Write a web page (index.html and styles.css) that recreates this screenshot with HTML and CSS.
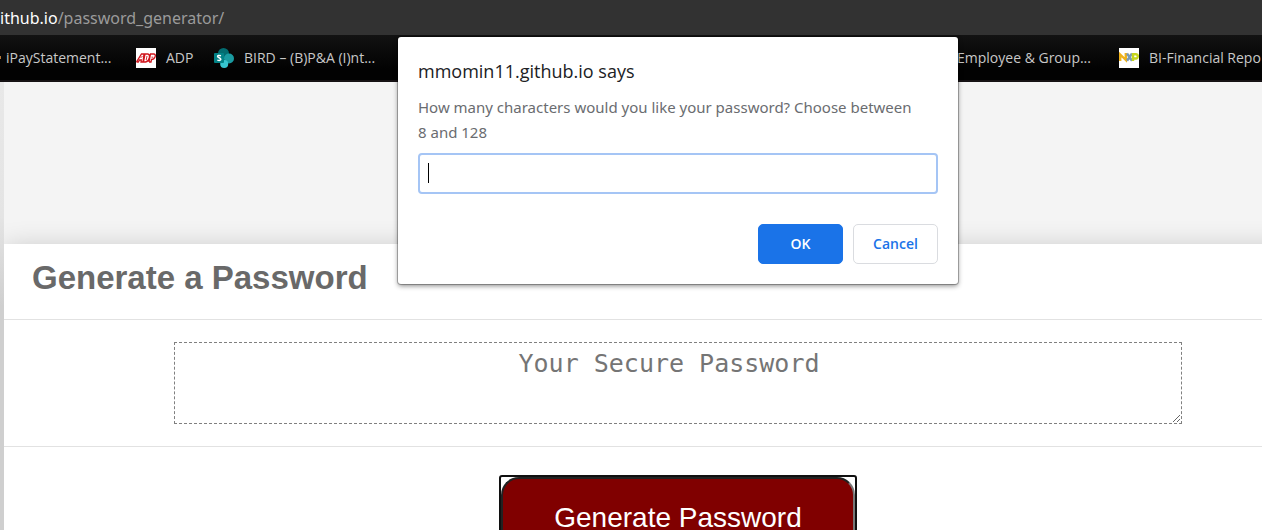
FILE: index.html
```html
<!DOCTYPE html>
<html lang="en">
<head>
<meta charset="utf-8">
<title>Password Generator</title>
<link rel="stylesheet" href="styles.css">
</head>
<body>
<header class="browser">
  <div class="address"><span class="host">ithub.io</span>/password_generator/</div>
  <nav class="bookmarks">
    <a class="bookmark first" href="#"><i class="dot"></i>iPayStatement...</a>
    <a class="bookmark" href="#">
      <svg class="icon" viewBox="0 0 20 20"><path fill="#fff" d="M0 0h20v20H0z"/><g fill="none" stroke="#d0141c" stroke-width="1.3"><path d="M.5 14L5.500 6H8L7 14H5L5.300 12H3.500L2.300 14H.5M7.500 14L9 6H12Q14 6.500 13.300 10T9.500 14H7.500M13 14L14.500 6H18Q20 6.500 19 9T15.500 11.500L15 14H13"/><path stroke-width=".9" d="M4.500 10L6.500 8M10.200 12L11 8M15.500 9.200H17.200"/></g></svg>
      ADP</a>
    <a class="bookmark" href="#">
      <svg class="icon" viewBox="0 0 20 20"><circle cx="9.500" cy="5.500" r="5.500" fill="#036c70"/><circle cx="15" cy="10.500" r="5" fill="#1a9ba1"/><circle cx="10.200" cy="16" r="4" fill="#37c6d0"/><rect y="5" width="10" height="10" rx="1" fill="#038387"/><path d="M7 7.800Q3.600 6.700 3.600 8.500C3.600 10 6.800 9.500 6.800 11.300Q6.500 13 3.300 12.100" fill="none" stroke="#fff" stroke-width="1.500"/></svg>
      BIRD – (B)P&amp;A (I)nt...</a>
    <a class="bookmark" href="#">Employee &amp; Group...</a>
    <a class="bookmark" href="#">
      <svg class="icon" viewBox="0 0 20 20"><path fill="#fff" d="M0 0h20v20H0z"/><g fill="none" stroke-width="2.400"><path stroke="#efb21b" d="M1.200 13V6.500L6.800 12V5"/><path stroke="#7899b5" d="M8 5.500L13 12.700M13 5.500L8 12.700"/><path stroke="#c5d51c" d="M14 13V6.200H17Q19 6.500 18.800 8.500T17 10.500H14"/></g></svg>
      BI-Financial Repo</a>
  </nav>
</header>
<div class="viewport">
  <main class="page">
    <section class="card">
      <h2 class="card-header">Generate a Password</h2>
      <div class="card-body">
        <textarea class="password" readonly placeholder="Your Secure Password" aria-label="Your Secure Password"></textarea>
      </div>
      <div class="card-footer">
        <span class="focus-ring"><button class="generate" type="button">Generate Password</button></span>
      </div>
    </section>
  </main>
</div>
<div class="stage">
  <form class="dialog" role="dialog" aria-labelledby="dialog-title">
    <h1 class="dialog-title" id="dialog-title">mmomin11.github.io says</h1>
    <label class="message" for="length">How many characters would you like your password? Choose between 8 and 128</label>
    <div class="field"><input class="length" id="length" type="text"><span class="caret"></span></div>
    <div class="actions">
      <button class="action ok" type="button">OK</button>
      <button class="action cancel" type="button">Cancel</button>
    </div>
  </form>
</div>
</body>
</html>
```
FILE: styles.css
```css
* { box-sizing: border-box; }

html, body { height: 100%; }

body {
  margin: 0;
  display: flex;
  flex-direction: column;
  overflow: hidden;
  position: relative;
  background: #f4f4f4;
  font-family: "Open Sans", "Noto Sans", sans-serif;
}

.address {
  height: 35px;
  line-height: 36px;
  background: #323232;
  color: #9b9b9b;
  font-family: "Noto Sans", sans-serif;
  font-size: 16px;
  white-space: nowrap;
}

.host { color: #fff; }

.bookmarks {
  height: 47px;
  display: grid;
  grid-template-columns: 136px 78px 743px 162px 1fr;
  align-items: center;
  overflow: hidden;
  background: linear-gradient(#121212, #020202 75%);
  border-bottom: 2px solid #161214;
}

.bookmark {
  display: flex;
  align-items: center;
  gap: 10px;
  color: #c8c8c8;
  font-size: 14px;
  text-decoration: none;
  white-space: nowrap;
}

.bookmark.first { gap: 5px; }

.dot {
  width: 1px;
  height: 3px;
  background: #b57838;
}

.icon {
  width: 20px;
  height: 20px;
  flex: none;
}

.viewport {
  flex: 1;
  min-height: 0;
  overflow: hidden;
  padding-left: 4px;
  background: linear-gradient(#e8e8e8, #e4e4e4 30%, #cfcfcf 50%, #cfcfcf);
}

.page {
  width: calc(100% + 90px);
  min-height: 100%;
  padding-top: 162px;
  overflow: hidden;
  background: #f4f4f4;
}

.card {
  background: #fff;
  box-shadow: 0 4px 26px rgba(0, 0, 0, 0.2);
  font-family: "Liberation Sans", Arial, sans-serif;
}

.card-header {
  margin: 0;
  padding: 14px 28px 22px;
  border-bottom: 1px solid #e2e2e2;
  color: #696969;
  font-size: 33px;
  line-height: 39px;
}

.card-body {
  display: flex;
  justify-content: center;
  padding: 22px;
  border-bottom: 1px solid #e2e2e2;
}

.password {
  width: 1008px;
  height: 82px;
  padding: 6px 18px 6px 0;
  border: 1px dashed #808080;
  outline: 0;
  background: #fff;
  font: 25px/30px "DejaVu Sans Mono", monospace;
  text-align: center;
}

.password::placeholder { color: #757575; }

.card-footer {
  display: flex;
  justify-content: center;
  padding: 28px;
}

.focus-ring {
  border: 2px solid #101010;
  border-radius: 3px;
}

.generate {
  display: block;
  width: 354px;
  padding: 22px;
  border: 2px solid #222;
  border-right-color: #777;
  border-radius: 18px;
  background: #800000;
  color: #fff;
  font: 28px/34px "Liberation Sans", Arial, sans-serif;
}

.stage {
  position: absolute;
  top: 37px;
  left: 4px;
  width: calc(100% + 86px);
  display: flex;
  justify-content: center;
}

.dialog {
  width: 560px;
  padding: 20px;
  border-radius: 3px;
  background: #fff;
  box-shadow: 0 0 0 1px rgba(0, 0, 0, 0.25), 0 2px 5px rgba(0, 0, 0, 0.45);
}

.dialog-title {
  margin: 0 0 10px;
  color: #202124;
  font-size: 18px;
  font-weight: 400;
  line-height: 28px;
}

.message {
  display: block;
  padding-right: 16px;
  color: #6a6c70;
  font-family: "Noto Sans", sans-serif;
  font-size: 15px;
  line-height: 25px;
}

.field {
  position: relative;
  margin: 8px 0 30px;
}

.length {
  display: block;
  width: 100%;
  height: 41px;
  padding: 0 8px;
  border: 2px solid #a5c5f5;
  border-radius: 4px;
  outline: 0;
  background: #fff;
  font: inherit;
  font-size: 15px;
}

.caret {
  position: absolute;
  top: 10px;
  left: 10px;
  width: 1px;
  height: 20px;
  background: #000;
}

.actions {
  display: flex;
  justify-content: flex-end;
  gap: 10px;
}

.action {
  width: 85px;
  height: 40px;
  padding: 0 0 2px;
  border: 1px solid #dadce0;
  border-radius: 5px;
  font: 600 14px "Open Sans", "Noto Sans", sans-serif;
}

.ok {
  border-color: #1a73e8;
  background: #1a73e8;
  color: #fff;
}

.cancel {
  background: #fff;
  color: #1a73e8;
}
```
